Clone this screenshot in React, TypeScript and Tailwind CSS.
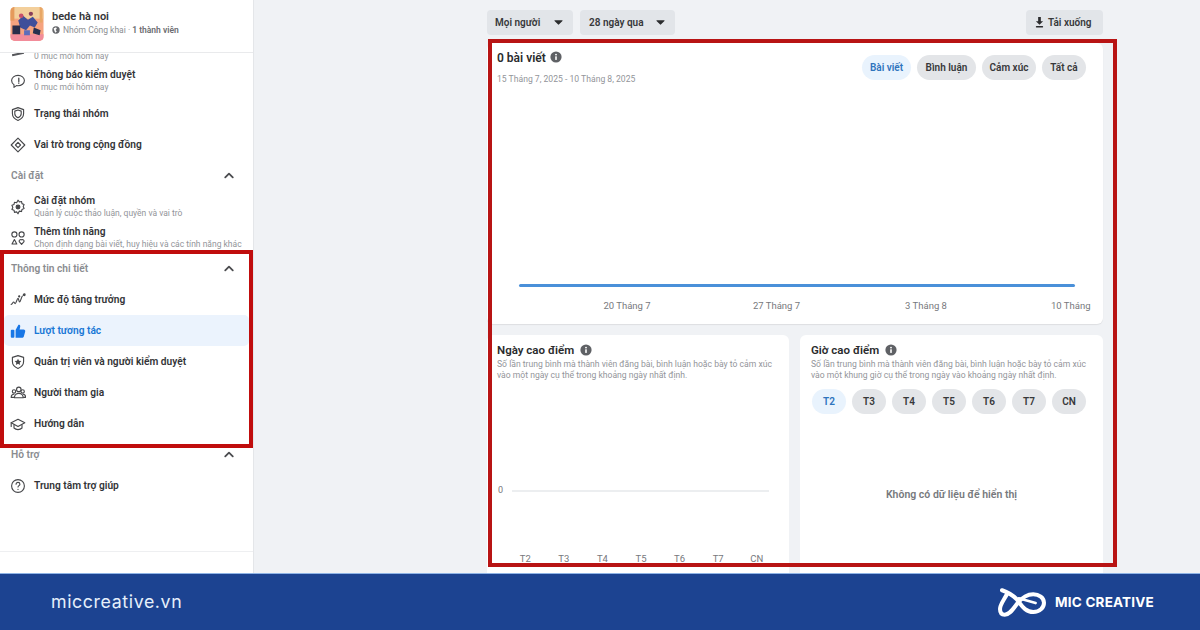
import React from "react";

const I = ({ children, className = "" }: { children: React.ReactNode; className?: string }) => (
  <svg viewBox="0 0 20 20" fill="none" stroke="currentColor" strokeWidth={1.4} strokeLinecap="round" strokeLinejoin="round" className={"w-[16px] h-[16px] text-[#46474a] shrink-0 " + className}>
    {children}
  </svg>
);

const Chevron = () => (
  <svg viewBox="0 0 12 8" className="w-[10px] h-[7px] text-[#4b4c4f]" fill="none" stroke="currentColor" strokeWidth={2.2} strokeLinecap="round" strokeLinejoin="round">
    <path d="M1.5 6.2 6 1.8l4.5 4.4" />
  </svg>
);

const Caret = () => (
  <svg viewBox="0 0 10 6" className="w-[9px] h-[5px] text-[#2b2c2e]" fill="currentColor">
    <path d="M0.6 0.4h8.8a.5.5 0 0 1 .35.85L5.4 5.4a.6.6 0 0 1-.8 0L.25 1.25A.5.5 0 0 1 .6.4z" />
  </svg>
);

const Info = ({ className = "" }: { className?: string }) => (
  <svg viewBox="0 0 12 12" className={"w-[12px] h-[12px] text-[#5f6165] " + className}>
    <circle cx="6" cy="6" r="5.6" fill="currentColor" />
    <rect x="5.2" y="5.2" width="1.6" height="3.8" rx=".4" fill="#fff" />
    <circle cx="6" cy="3.6" r=".95" fill="#fff" />
  </svg>
);

const Row = ({ icon, title, sub, active, className = "h-[31px]" }: { icon: React.ReactNode; title: string; sub?: string; active?: boolean; className?: string }) => (
  <div className={"mx-[4px] pl-[6px] flex items-center gap-[8px] rounded-[5px] " + className + (active ? " bg-[#ebf3fd]" : "")}>
    <div className="w-[16px] flex justify-center">{icon}</div>
    <div className="min-w-0">
      <div className={"text-[10.2px] leading-[13px] font-semibold whitespace-nowrap " + (active ? "text-[#1877d6]" : "text-[#333437]")}>{title}</div>
      {sub && <div className="text-[8.5px] leading-[13px] text-[#93959a] whitespace-nowrap">{sub}</div>}
    </div>
  </div>
);

const Section = ({ title }: { title: string }) => (
  <div className="h-[31px] pl-[11px] pr-[19px] flex items-center justify-between">
    <span className="text-[10.2px] font-semibold text-[#8a8c90]">{title}</span>
    <Chevron />
  </div>
);

const Pill = ({ children, active, className = "" }: { children: React.ReactNode; active?: boolean; className?: string }) => (
  <div className={"h-[25px] rounded-full flex items-center justify-center text-[10px] font-semibold " + (active ? "bg-[#e9f3fd] text-[#2f74bd] " : "bg-[#e3e5e8] text-[#37383a] ") + className}>
    {children}
  </div>
);

const Btn = ({ children, className = "" }: { children: React.ReactNode; className?: string }) => (
  <div className={"h-[25px] rounded-[4px] bg-[#e2e5e9] flex items-center text-[10px] font-semibold text-[#37383a] " + className}>{children}</div>
);

const Avatar = () => (
  <svg viewBox="0 0 34 35" className="w-[34px] h-[34px] rounded-[5px] shrink-0">
    <rect width="34" height="35" fill="#f6a37f" />
    <rect width="34" height="12" fill="#f3cf9b" />
    <rect x="0" y="0" width="4" height="14" fill="#e59a5b" />
    <rect x="30" y="0" width="3" height="16" fill="#e8a766" />
    <rect y="28" width="34" height="7" fill="#f28c9a" />
    <path d="M8 14l5-5 5 4 5-3 5 6-3 5-5-2-4 5-6-3z" fill="#3f4f9a" />
    <circle cx="11" cy="9" r="2.4" fill="#c8506a" />
    <circle cx="21" cy="7" r="2.2" fill="#8b3f5a" />
    <path d="M2 19h8v9H2z" fill="#2a2d4a" />
    <path d="M24 21l7 3-1 5-7-2z" fill="#27304f" />
    <path d="M14 24h6v5h-6z" fill="#5d6dbb" />
  </svg>
);

const Logo = () => (
  <svg viewBox="0 0 143 85" className="w-[48px] h-[29px]" fill="none" stroke="#fff" strokeWidth={12} strokeLinecap="round" strokeLinejoin="round">
    <path d="M12 6C30 12 45 22 55 32 70 50 80 71 105 71 125 71 137 57 137 43 137 28 122 18 105 18 85 18 70 30 58 45 45 62 35 79 20 79 10 79 6 72 6 62 6 48 18 35 28 15" />
    <path d="M62 30 112 44" strokeWidth={8} />
  </svg>
);

export default function App() {
  return (
    <div className="w-[1200px] h-[630px] overflow-hidden relative flex flex-col bg-[#f0f2f5] font-['Roboto','Noto_Sans',sans-serif]">
      <div className="flex h-[573px] overflow-hidden">
        {/* sidebar */}
        <aside className="w-[254px] shrink-0 bg-white border-r border-[#e4e6e9] flex flex-col relative">
          <div className="h-[53px] shrink-0 border-b border-[#e9eaec] flex items-center pl-[10px] gap-[8px] pb-[5px] bg-white z-10">
            <Avatar />
            <div className="-mt-[2px]">
              <div className="text-[11px] leading-[15px] font-semibold text-[#333437]">bede hà noi</div>
              <div className="flex items-center gap-[3px] text-[8.5px] leading-[13px] text-[#8c8e92]">
                <svg viewBox="0 0 10 10" className="w-[8px] h-[8px]"><circle cx="5" cy="5" r="4.6" fill="#65676b" /><path d="M2 3l3-1.5L6 3 4.500 5 6 7 4 8.500 3 6z" fill="#fff" /></svg>
                <span>Nhóm Công khai · <b className="font-semibold text-[#6b6d71]">1 thành viên</b></span>
              </div>
            </div>
          </div>
          <div className="flex-1 flex flex-col min-h-0">
            <div className="h-[7px] mx-[4px] pl-[6px] flex gap-[8px] items-start">
              <div className="w-[16px] flex justify-center"><div className="w-[12px] h-[2px] bg-[#55565a] -rotate-12" /></div>
              <div className="text-[8.5px] leading-[7px] text-[#93959a]">0 mục mới hôm nay</div>
            </div>
            <div className="h-[4px]" />
            <Row className="h-[34px]" title="Thông báo kiểm duyệt" sub="0 mục mới hôm nay" icon={<I><path d="M10 3c4.400 0 8 2.800 8 6.500S14.400 16 10 16c-.7 0-1.300-.1-2-.2L5 18v-3.300C3.100 13.500 2 11.600 2 9.500 2 5.800 5.600 3 10 3z" /><path d="M11 6.500v4M11 12.500v.3" strokeWidth={1.6} /></I>} />
            <Row title="Trạng thái nhóm" icon={<I><path d="M10 2l7 2.500v5c0 4.500-3 7-7 8.500-4-1.500-7-4-7-8.500v-5z" /><path d="M10 5l4 1.400v3.400c0 2.500-1.700 4-4 5-2.300-1-4-2.500-4-5V6.400z" /></I>} />
            <Row title="Vai trò trong cộng đồng" icon={<I><path d="M10 1.500l8.500 8.500-8.500 8.500L1.500 10z" /><path d="M10 6.800 13.200 10 10 13.200 6.800 10z" /></I>} />
            <Section title="Cài đặt" />
            <Row title="Cài đặt nhóm" sub="Quản lý cuộc thảo luận, quyền và vai trò" icon={<I><path d="M10 1.500l1.700 2.200 2.700-.6.6 2.700 2.600 1-1.100 2.700 1.100 2.500-2.600 1-.6 2.700-2.700-.6L10 18.500l-1.700-2.400-2.700.6-.6-2.700-2.600-1 1.100-2.500-1.100-2.700 2.600-1 .6-2.700 2.700.6z" /><circle cx="10" cy="10" r="2.400" fill="currentColor" /></I>} />
            <Row title="Thêm tính năng" sub="Chọn định dạng bài viết, huy hiệu và các tính năng khác" icon={<I><circle cx="5.500" cy="5.500" r="3.200" /><circle cx="14.500" cy="5.500" r="3.200" /><path d="M2.500 17.500 5.500 12l3 5.500z" /><path d="M14.500 18 11.500 14.500a2 2 0 0 1 3-2.200 2 2 0 0 1 3 2.200z" /></I>} />
            <Section title="Thông tin chi tiết" />
            <Row title="Mức độ tăng trưởng" icon={<I><path d="M1.500 15.500c1.500 0 2-3 3-3s1 2 2 2 2.500-6.500 3.500-6.500 1 4.500 2 4.500 2.500-7 3.500-7.500" /><circle cx="17.800" cy="3.500" r="1.100" fill="currentColor" /><circle cx="11.500" cy="5.500" r=".7" fill="currentColor" /></I>} />
            <Row active title="Lượt tương tác" icon={
              <svg viewBox="0 0 20 20" className="w-[16px] h-[16px] text-[#1877e6]" fill="currentColor">
                <rect x="1" y="8.500" width="4.500" height="10" rx="1.200" />
                <path d="M7 18.500V8.800l3.200-6c.4-.9 2.600-.7 2.600 1.400 0 1.200-.5 2.600-.8 3.800h5c1.500 0 2.400 1.300 2 2.600l-1.700 6.200c-.3 1.200-1.300 1.700-2.300 1.700z" />
              </svg>} />
            <Row title="Quản trị viên và người kiểm duyệt" icon={<I><path d="M10 2l7 2.200v5.300c0 4.500-3 7-7 8.500-4-1.500-7-4-7-8.500V4.200z" /><path d="M10 5.800l1.300 2.700 2.900.3-2.100 2 .6 2.900-2.700-1.500-2.700 1.500.6-2.900-2.100-2 2.900-.3z" fill="currentColor" stroke="none" /></I>} />
            <Row title="Người tham gia" icon={<I><circle cx="11" cy="5.500" r="2.800" /><circle cx="5" cy="8" r="2.100" /><circle cx="15.800" cy="8" r="2.100" /><path d="M5.500 16c0-3 2.500-5.500 5.500-5.500s5.500 2.500 5.500 5.500z" /><path d="M5 15.500H1.500c0-2 1.300-4 3.500-4M16.500 11.500c2 0 3 1.700 3 4h-2.500" /></I>} />
            <Row title="Hướng dẫn" icon={<I><path d="M1.500 8.500 10 4l8.500 4.500L10 13z" /><path d="M5 11v4c1.500 1.500 3 2 5 2s3.500-.5 5-2v-4" /><path d="M1.500 8.500V13" /></I>} />
            <Section title="Hỗ trợ" />
            <Row title="Trung tâm trợ giúp" icon={<I><circle cx="10" cy="10" r="8" /><path d="M7.600 7.800c0-1.400 1.100-2.300 2.400-2.300s2.400.9 2.400 2.200c0 1.800-2.400 1.800-2.400 3.600" /><path d="M10 14.200v.2" /></I>} />
            <div className="mt-auto h-[22px] border-t border-[#eeeff1]" />
          </div>
        </aside>

        {/* main */}
        <main className="flex-1 min-w-0 pl-[233px] pr-[97px] pt-[10px] flex flex-col">
          <div className="flex h-[25px] shrink-0 mb-[8px]">
            <Btn className="w-[86px] pl-[8px] pr-[10px] justify-between"><span>Mọi người</span><Caret /></Btn>
            <Btn className="w-[95px] ml-[7px] pl-[9px] pr-[10px] justify-between"><span>28 ngày qua</span><Caret /></Btn>
            <Btn className="w-[77px] ml-auto pl-[9px] gap-[4px]">
              <svg viewBox="0 0 10 12" className="w-[9px] h-[11px] text-[#2b2c2e]" fill="currentColor"><path d="M3.500 0h3v4.500H9L5 8.500 1 4.500h2.500z" /><rect x="1" y="10" width="8" height="1.500" rx=".5" /></svg>
              <span>Tải xuống</span>
            </Btn>
          </div>

          {/* chart card */}
          <section className="h-[281px] shrink-0 rounded-[6px] bg-white shadow-[0_1px_1px_rgba(0,0,0,0.08)] flex flex-col pl-[10px]">
            <div className="flex justify-between pr-[17px] pt-[8px] h-[37px]">
              <div className="flex items-start gap-[4px]">
                <span className="text-[12px] leading-[14px] font-semibold text-[#2a2b2d]">0 bài viết</span>
                <Info />
              </div>
              <div className="flex gap-[6px] pt-[4px]">
                <Pill active className="w-[49px]">Bài viết</Pill>
                <Pill className="w-[59px]">Bình luận</Pill>
                <Pill className="w-[54px]">Cảm xúc</Pill>
                <Pill className="w-[44px]">Tất cả</Pill>
              </div>
            </div>
            <div className="text-[8.6px] leading-[12px] text-[#93959a] -mt-[7px]">15 Tháng 7, 2025 - 10 Tháng 8, 2025</div>
            <div className="h-[2.500px] mt-[199px] ml-[22px] mr-[28px] bg-[#4a90d9] rounded-full" />
            <div className="flex text-[9.500px] leading-[12px] text-[#77797d] mt-[13px] ml-[55px]">
              <div className="w-[150px] text-center">20 Tháng 7</div>
              <div className="w-[149px] text-center">27 Tháng 7</div>
              <div className="w-[150px] text-center">3 Tháng 8</div>
              <div className="ml-[50px] whitespace-nowrap">10 Tháng</div>
            </div>
          </section>

          {/* bottom cards */}
          <div className="flex gap-[11px] mt-[11px] flex-1 min-h-0">
            <section className="w-[302px] rounded-t-[6px] bg-white pl-[10px] pt-[8px]">
              <div className="flex items-center gap-[6px]">
                <span className="text-[11.5px] leading-[14px] font-semibold text-[#2a2b2d]">Ngày cao điểm</span>
                <Info />
              </div>
              <p className="text-[8.6px] leading-[11px] text-[#93959a] mt-[2px] whitespace-nowrap">Số lần trung bình mà thành viên đăng bài, bình luận hoặc bày tỏ cảm xúc<br />vào một ngày cụ thể trong khoảng ngày nhất định.</p>
              <div className="flex items-center mt-[104px] h-[12px]">
                <span className="text-[9px] text-[#77797d] w-[15px] pl-[1px]">0</span>
                <div className="h-[2px] w-[257px] bg-[#eceef0]" />
              </div>
              <div className="grid grid-cols-7 w-[270px] ml-[9px] mt-[56px] text-[9.500px] leading-[12px] text-[#77797d] text-center">
                {["T2", "T3", "T4", "T5", "T6", "T7", "CN"].map((d) => <div key={d}>{d}</div>)}
              </div>
            </section>
            <section className="flex-1 rounded-t-[6px] bg-white pl-[11px] pt-[8px]">
              <div className="flex items-center gap-[6px]">
                <span className="text-[11.5px] leading-[14px] font-semibold text-[#2a2b2d]">Giờ cao điểm</span>
                <Info />
              </div>
              <p className="text-[8.6px] leading-[11px] text-[#93959a] mt-[2px] whitespace-nowrap">Số lần trung bình mà thành viên đăng bài, bình luận hoặc bày tỏ cảm xúc<br />vào một khung giờ cụ thể trong ngày vào khoảng ngày nhất định.</p>
              <div className="flex gap-[6px] mt-[8px] pl-[1px]">
                <Pill active className="w-[34px]">T2</Pill>
                {["T3", "T4", "T5", "T6", "T7", "CN"].map((d) => <Pill key={d} className="w-[34px]">{d}</Pill>)}
              </div>
              <div className="mt-[75px] pr-[11px] text-center text-[10.5px] leading-[12px] font-semibold text-[#77797d]">Không có dữ liệu để hiển thị</div>
            </section>
          </div>
        </main>
      </div>

      {/* footer */}
      <footer className="h-[57px] shrink-0 bg-[#1c4391] border-t-[1px] border-[#8fb4e6] flex items-center justify-between pl-[51px] pr-[46px]">
        <span className="text-[17.8px] tracking-[0.6px] text-[#e6f0fb] font-['Inter',sans-serif]">miccreative.vn</span>
        <div className="flex items-center gap-[9px]">
          <Logo />
          <span className="text-[13.500px] font-bold text-white tracking-[0.2px] font-['Inter',sans-serif]">MIC CREATIVE</span>
        </div>
      </footer>

      {/* annotation frames */}
      <div className="absolute left-0 top-[250px] w-[253px] h-[198px] border-4 border-[#c00d0d] pointer-events-none" />
      <div className="absolute left-[488px] top-[39px] w-[629px] h-[528px] border-4 border-[#b81414] pointer-events-none" />
    </div>
  );
}
